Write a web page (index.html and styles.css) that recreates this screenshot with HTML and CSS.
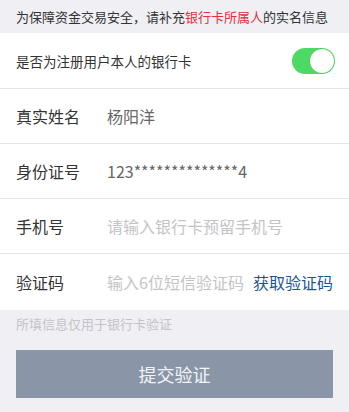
FILE: index.html
```html
<!DOCTYPE html>
<html lang="zh-CN">
<head>
<meta charset="utf-8">
<title>实名信息</title>
<link rel="stylesheet" href="styles.css">
</head>
<body>
<div class="page">
  <div class="tip">为保障资金交易安全，请补充<span class="red">银行卡所属人</span>的实名信息</div>
  <div class="list">
    <div class="row row-switch">
      <span class="switch-label">是否为注册用户本人的银行卡</span>
      <span class="switch"><span class="knob"></span></span>
    </div>
    <div class="row">
      <span class="label">真实姓名</span>
      <span class="value">杨阳洋</span>
    </div>
    <div class="row">
      <span class="label">身份证号</span>
      <span class="value">123**************4</span>
    </div>
    <div class="row">
      <span class="label">手机号</span>
      <span class="placeholder">请输入银行卡预留手机号</span>
    </div>
    <div class="row row-last">
      <span class="label">验证码</span>
      <span class="placeholder">输入6位短信验证码</span>
      <span class="code-btn">获取验证码</span>
    </div>
  </div>
  <div class="note">所填信息仅用于银行卡验证</div>
  <div class="btn">提交验证</div>
</div>
</body>
</html>
```
FILE: styles.css
```css
html, body {
  margin: 0;
  padding: 0;
  background: #efeff4;
}
body {
  font-family: "Noto Sans CJK SC", "Noto Sans", "Liberation Sans", sans-serif;
  color: #333;
}
.page {
  width: 349px;
  height: 412px;
  overflow: hidden;
}
.tip {
  height: 33px;
  line-height: 33px;
  padding-left: 16px;
  font-size: 13px;
  color: #333;
  white-space: nowrap;
}
.red { color: #e0303b; }
.list {
  background: #fff;
}
.row {
  display: flex;
  align-items: center;
  height: 54px;
  padding: 0 16px;
  border-bottom: 1px solid #e6e6ea;
  font-size: 16px;
  white-space: nowrap;
}
.row-switch {
  height: 55px;
  justify-content: space-between;
  padding-right: 14px;
}
.row-last {
  height: 56px;
  border-bottom: none;
}
.switch-label {
  font-size: 13.5px;
  color: #333;
}
.switch {
  position: relative;
  width: 43px;
  height: 26px;
  border-radius: 13px;
  background: #4cd964;
}
.knob {
  position: absolute;
  right: 1px;
  top: 1px;
  width: 24px;
  height: 24px;
  border-radius: 50%;
  background: #fff;
  box-shadow: 0 0 1px rgba(0,0,0,0.25);
}
.label {
  width: 91px;
  flex: none;
  color: #333;
}
.value {
  color: #666;
}
.placeholder {
  color: #c4c4c8;
  flex: 1;
}
.code-btn {
  color: #1b5598;
}
.note {
  height: 40px;
  line-height: 28px;
  padding-left: 16px;
  font-size: 13px;
  color: #c4c4c8;
}
.btn {
  margin: 0 16px;
  height: 48px;
  line-height: 48px;
  text-align: center;
  background: #8a96a8;
  color: #f2f4f7;
  font-size: 18px;
}
```
